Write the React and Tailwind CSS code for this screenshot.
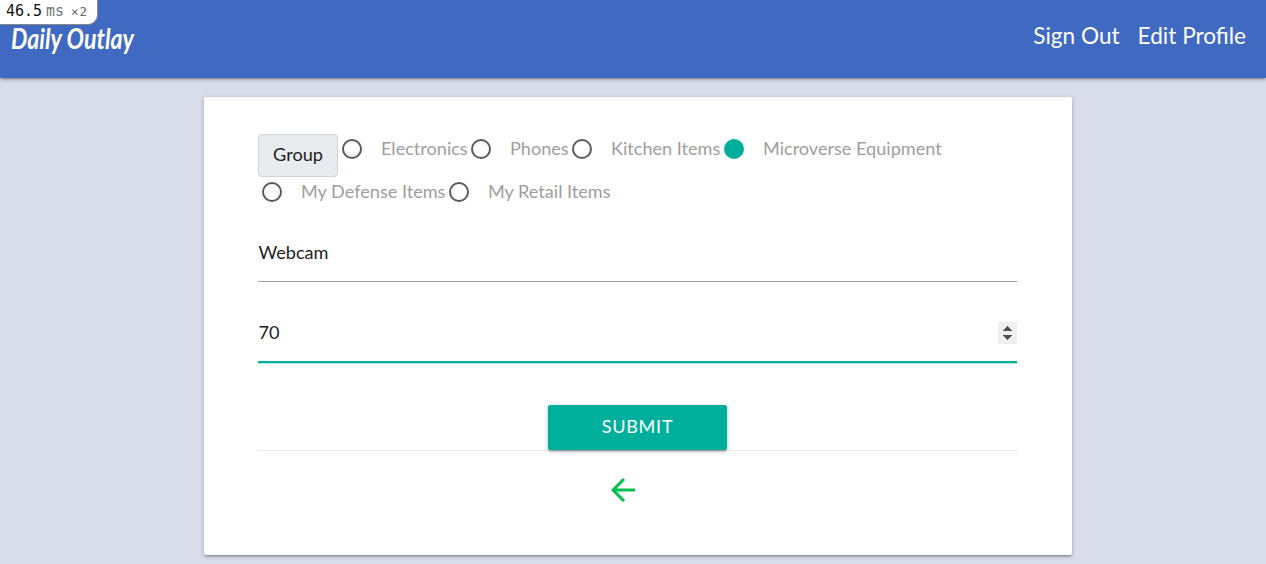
const rows = [
  [["Electronics", "w-[129px]"], ["Phones", "w-[101px]"], ["Kitchen Items", "w-[152px]"], ["Microverse Equipment", "w-[222px]", true]],
  [["My Defense Items", "w-[187px]"], ["My Retail Items", "w-[165px]"]],
];

function Choice({ item: [label, width, checked] }) {
  return (
    <label className={`flex h-[30px] shrink-0 items-center whitespace-nowrap pl-1 ${width}`}>
      <span className={`mr-[19px] size-5 shrink-0 rounded-full border-2 ${checked ? "border-[#00af9b] bg-[#00af9b]" : "border-[#5a5a5a]"}`} />
      <span className="pb-0.5 text-[18.1px] leading-[28px] text-[#9e9e9e]">{label}</span>
    </label>
  );
}

export default function App() {
  return (
    <div className="flex h-[564px] flex-col overflow-hidden bg-[#d9dcea] font-['Lato',sans-serif] text-[18.1px] text-[#212121]">
      <header className="relative flex h-[78px] shrink-0 items-start justify-between bg-[#4069c2] pr-5 text-white shadow-[0_2px_2px_0_rgba(0,0,0,0.14),0_3px_1px_-2px_rgba(0,0,0,0.12),0_1px_5px_0_rgba(0,0,0,0.2)]">
        <svg className="ml-[10px] mt-5 h-[42px] w-[130px] overflow-visible" aria-label="Daily Outlay">
          <text x="1" y="28.5" textLength="123" lengthAdjust="spacingAndGlyphs" className="fill-white font-['Lato',cursive] text-[28px] font-bold italic">Daily Outlay</text>
        </svg>
        <nav className="mt-[18px] flex gap-[18px] text-[22.6px] leading-9">
          <a>Sign Out</a>
          <a>Edit Profile</a>
        </nav>
        <div className="absolute left-0 top-0 flex h-[25px] w-[98px] items-center rounded-br-[10px] border-b border-r border-[#888] bg-white pb-[3px] pl-[6px] font-['DejaVu_Sans_Mono',monospace] text-[15px] leading-5 text-[#111]">
          <span className="w-10">46.5</span>
          <span className="w-[25px] text-[#777]">ms</span>
          <span className="pt-0.5 text-[12.5px] tracking-[1px] text-[#666]">×2</span>
        </div>
      </header>
      <main className="ml-[203.5px] mt-[19px] h-[457.5px] w-[868px] rounded-[2px] bg-white px-[54.5px] pt-[37px] shadow-[0_2px_2px_0_rgba(0,0,0,0.14),0_3px_1px_-2px_rgba(0,0,0,0.12),0_1px_5px_0_rgba(0,0,0,0.2)]">
        <div className="flex h-[43px]">
          <span className="flex h-[43px] w-20 items-center justify-center rounded-[4px] border border-[#ced4da] bg-[#e9ecef] pb-px">Group</span>
          {rows[0].map((item) => <Choice key={item[0]} item={item} />)}
        </div>
        <div className="flex h-[43px]">
          {rows[1].map((item) => <Choice key={item[0]} item={item} />)}
        </div>
        <div className="mt-2 flex h-[54px] items-center border-b border-[#9e9e9e] pb-[3px] pl-[0.5px]">Webcam</div>
        <div className="mt-[26px] flex h-[55px] items-center justify-between border-b-2 border-[#00af9b] pb-[3px] pl-[0.5px] shadow-[0_1px_0_0_#b2e7e1]">
          <span>70</span>
          <svg className="h-[22px] w-[19px] bg-[#efefef]" viewBox="0 0 19 22" fill="#505050" shapeRendering="crispEdges">
            <path d="M4.5 9h10L9.5 3.5zM4.5 13h10L9.5 18.5z" />
          </svg>
        </div>
        <div className="mt-[42px] flex h-[46px] justify-center border-b border-[#e9e9e9]">
          <button className="h-[45px] w-[179px] rounded-[2px] bg-[#00af9b] pb-px text-[18.1px] tracking-[0.7px] text-white shadow-[0_2px_2px_0_rgba(0,0,0,0.14),0_3px_1px_-2px_rgba(0,0,0,0.12),0_1px_5px_0_rgba(0,0,0,0.2)]">SUBMIT</button>
        </div>
        <div className="flex pl-[353px] pt-[27px]">
          <svg className="h-6 w-6" viewBox="0 0 24 24" fill="none" stroke="#00c04b" strokeWidth="3">
            <path d="M24 12H2M13 1L2 12L13 23" />
          </svg>
        </div>
      </main>
    </div>
  );
}
